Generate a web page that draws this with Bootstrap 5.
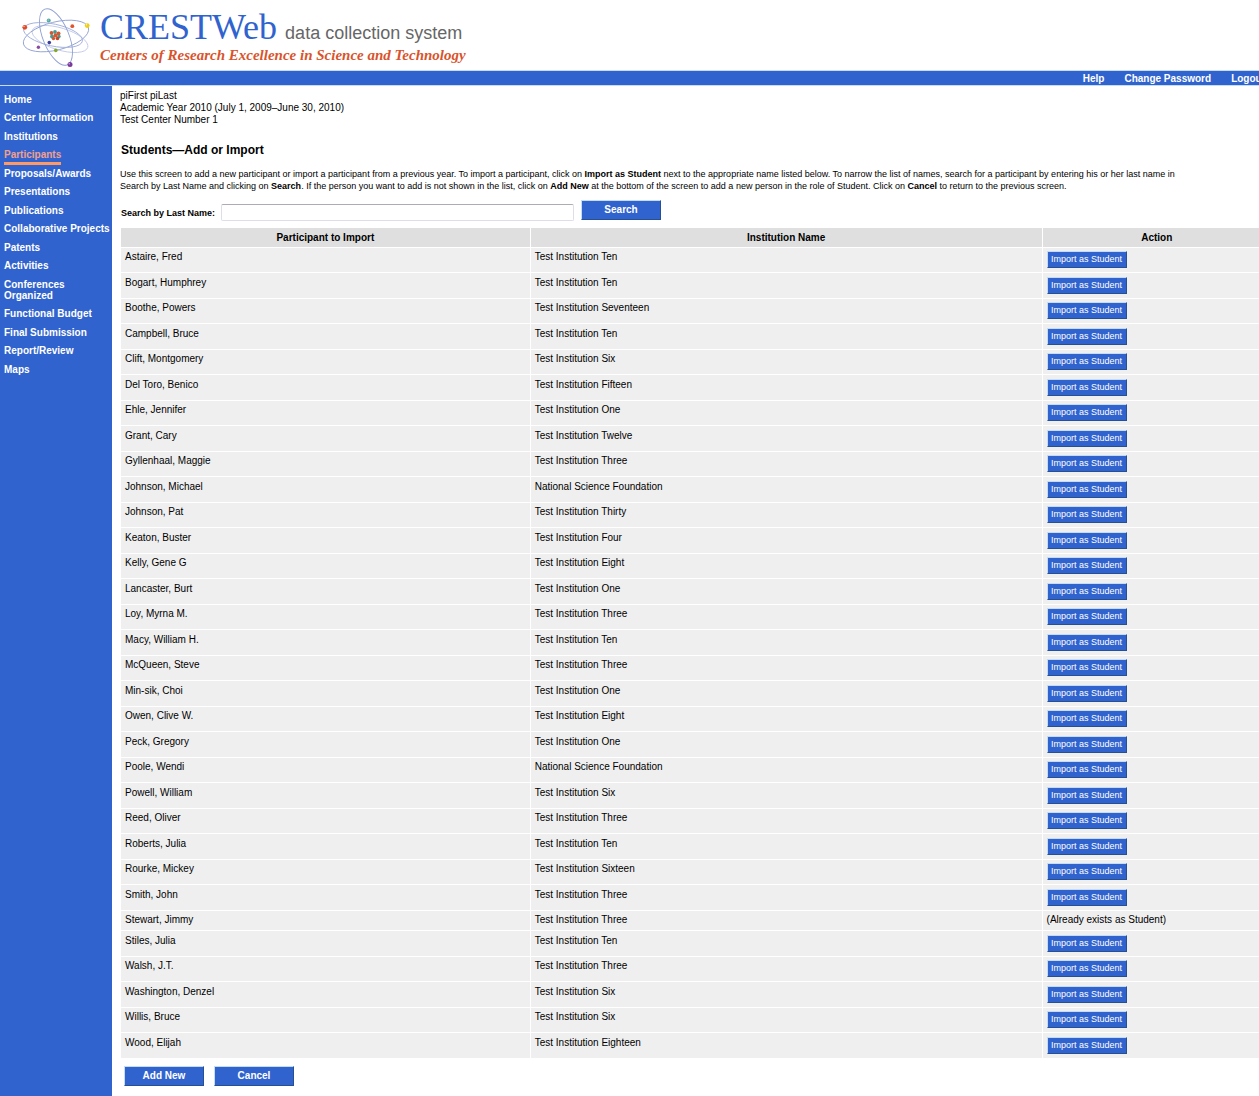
<!DOCTYPE html>
<html lang="en">
<head>
<meta charset="utf-8">
<meta name="viewport" content="width=device-width, initial-scale=1">
<title>CRESTWeb – Students: Add or Import</title>
<link href="https://cdn.jsdelivr.net/npm/bootstrap@5.3.0/dist/css/bootstrap.min.css" rel="stylesheet">
<style>
:root { --crest-blue: #3063ce; --crest-pale: #c5dcf5; --crest-orange: #ff9966; }
body { font-family: "Liberation Sans", Arial, sans-serif; font-size: 10px; line-height: 12px; color: #000; background: #fff; overflow-x: hidden; }
a { text-decoration: none; }
.page-shell { min-width: 1272px; }
.brand-bar { height: 70px; padding: 8px 0 0 20px; }
.brand-atom { width: 72px; height: 60px; }
.brand-name { font-family: "Liberation Serif", "Times New Roman", serif; font-size: 36px; line-height: 38px; color: var(--crest-blue); }
.brand-sub { font-size: 18px; line-height: 20px; color: #666; }
.brand-tag { font-family: "Liberation Serif", "Times New Roman", serif; font-size: 15px; line-height: 18px; font-weight: bold; font-style: italic; color: #d9532c; }
.top-strip { height: 16px; background: var(--crest-blue); border-top: 1px solid var(--crest-pale); border-bottom: 1px solid var(--crest-pale); gap: 20px; padding-right: 7px; line-height: 16px; font-weight: bold; }
.top-strip a, .side-menu a { color: #fff; }
.side-menu { width: 112px; background: var(--crest-blue); padding: 8px 4px 0; line-height: 11px; font-weight: bold; }
.side-menu li { padding-bottom: 7px; }
.side-menu li:nth-child(even) { padding-bottom: 8px; }
.side-menu a.here { color: #f0a08c; border-bottom: 3px solid var(--crest-orange); padding-bottom: 2px; }
.main-pane { padding: 4px 0 10px 8px; }
.screen-title { font-size: 12px; line-height: 16px; font-weight: bold; margin: 16px 0 0 1px; }
.intro-text { font-size: 9px; margin: 10px 30px 0 0; }
.search-row { padding: 8px 0 0 1px; }
.search-row label { font-size: 9px; font-weight: bold; padding-top: 7px; }
.search-row input { width: 353px; height: 17px; margin: 4px 7px 0 6px; padding: 0 3px; border: 1px solid #dcdfe8; border-top-color: #abadb3; border-radius: 2px; }
.crest-btn { background: var(--crest-blue); color: #fff; border: 1px solid; border-color: var(--crest-pale) #26508f #26508f var(--crest-pale); width: 80px; height: 20px; padding: 0; line-height: 18px; font-weight: bold; white-space: nowrap; }
.crest-btn.row-btn { height: 17px; line-height: 15px; font-size: 9px; font-weight: normal; display: block; }
.import-table { border-collapse: separate; border-spacing: 1px; table-layout: fixed; margin-top: 6px; color: #000; }
.import-table.import-table th, .import-table.import-table td { border: 0; box-shadow: none; padding: 3px 4px 0; color: #000; }
.import-table.import-table th { background: #dfdfdf; height: 19px; text-align: center; padding: 0; vertical-align: middle; }
.import-table.import-table td { background: #efefef; height: 24px; vertical-align: top; }
.import-table.import-table tbody tr:nth-child(even) td { height: 25px; padding-top: 4px; }
.import-table.import-table tbody tr.existing td { height: 19px; }
.col-name { width: 35.6%; } .col-inst { width: 44.5%; } .col-act { width: 19.9%; }
.foot-actions { gap: 10px; padding: 7px 0 0 4px; }
</style>
<script src="https://cdn.jsdelivr.net/npm/bootstrap@5.3.0/dist/js/bootstrap.bundle.min.js" defer></script>
</head>
<body>
<div class="page-shell min-vh-100 d-flex flex-column">
<header>
  <div class="brand-bar d-flex align-items-start">
    <svg class="brand-atom flex-shrink-0" viewBox="20 8 72 60" fill="none" role="img" aria-label="Atom">
      <g stroke-width="0.9">
        <ellipse cx="60" cy="39" rx="29" ry="11" transform="rotate(17 60 39)" stroke="#c3cbea"/>
        <ellipse cx="56" cy="36" rx="33.500" ry="14" transform="rotate(-14 56 36)" stroke="#93a3d3"/>
        <ellipse cx="53" cy="35" rx="30" ry="11" transform="rotate(12 53 35)" stroke="#a3b0dc"/>
        <ellipse cx="56" cy="37" rx="30" ry="13" transform="rotate(68 56 37)" stroke="#8fa0d3"/>
      </g>
      <g>
        <circle cx="51.500" cy="33" r="1.900" fill="#d9562f"/><circle cx="55" cy="32" r="1.900" fill="#3f9d95"/><circle cx="58.500" cy="33.500" r="2" fill="#d9562f"/>
        <circle cx="52" cy="36.500" r="1.900" fill="#3f9d95"/><circle cx="55.500" cy="35.500" r="2" fill="#d9562f"/><circle cx="59" cy="36.500" r="1.700" fill="#3f9d95"/>
        <circle cx="53.500" cy="38.500" r="1.700" fill="#d9562f"/><circle cx="57.500" cy="38.500" r="1.800" fill="#c74526"/>
      </g>
      <circle cx="24.800" cy="27.300" r="2.400" fill="#e04a25"/><circle cx="87.200" cy="25.600" r="2.400" fill="#efcf12"/>
      <circle cx="70" cy="64.500" r="2.500" fill="#7a3a9c"/><circle cx="48.700" cy="20.500" r="2" fill="#57aaa4"/>
      <circle cx="72.300" cy="26.200" r="1.900" fill="#e0552c"/><circle cx="38.400" cy="47.200" r="1.700" fill="#8a4aa6"/>
      <circle cx="55.800" cy="50.400" r="1.800" fill="#82a82b"/><circle cx="49.300" cy="42.600" r="1.800" fill="#3d3f9c"/>
      <g fill="#fff" opacity="0.7"><circle cx="24" cy="26.500" r="0.700"/><circle cx="86.500" cy="24.800" r="0.700"/><circle cx="69.200" cy="63.700" r="0.700"/><circle cx="48.200" cy="20" r="0.600"/></g>
    </svg>
    <div class="ps-2">
      <div class="d-flex align-items-baseline gap-2"><span class="brand-name">CRESTWeb</span><span class="brand-sub">data collection system</span></div>
      <div class="brand-tag">Centers of Research Excellence in Science and Technology</div>
    </div>
  </div>
  <nav class="top-strip d-flex justify-content-end" aria-label="Account">
    <a href="#">Help</a><a href="#">Change Password</a><a href="#">Logout</a>
  </nav>
</header>
<div class="d-flex flex-grow-1">
  <nav class="side-menu flex-shrink-0" aria-label="Sections">
    <ul class="list-unstyled mb-0">
      <li><a href="#">Home</a></li>
      <li><a href="#">Center Information</a></li>
      <li><a href="#">Institutions</a></li>
      <li><a href="#" class="here" aria-current="page">Participants</a></li>
      <li><a href="#">Proposals/Awards</a></li>
      <li><a href="#">Presentations</a></li>
      <li><a href="#">Publications</a></li>
      <li class="text-nowrap"><a href="#">Collaborative Projects</a></li>
      <li><a href="#">Patents</a></li>
      <li><a href="#">Activities</a></li>
      <li><a href="#">Conferences<br>Organized</a></li>
      <li><a href="#">Functional Budget</a></li>
      <li><a href="#">Final Submission</a></li>
      <li><a href="#">Report/Review</a></li>
      <li><a href="#">Maps</a></li>
    </ul>
  </nav>
  <main class="main-pane flex-grow-1">
    <div>piFirst piLast</div>
    <div>Academic Year 2010 (July 1, 2009–June 30, 2010)</div>
    <div>Test Center Number 1</div>
    <h1 class="screen-title">Students—Add or Import</h1>
    <p class="intro-text">Use this screen to add a new participant or import a participant from a previous year. To import a participant, click on <b>Import as Student</b> next to the appropriate name listed below. To narrow the list of names, search for a participant by entering his or her last name in<br>Search by Last Name and clicking on <b>Search</b>. If the person you want to add is not shown in the list, click on <b>Add New</b> at the bottom of the screen to add a new person in the role of Student. Click on <b>Cancel</b> to return to the previous screen.</p>
    <form class="search-row d-flex align-items-start">
      <label for="lastName">Search by Last Name:</label>
      <input type="text" id="lastName">
      <button type="button" class="crest-btn">Search</button>
    </form>
    <table class="table mb-0 import-table">
      <colgroup><col class="col-name"><col class="col-inst"><col class="col-act"></colgroup>
      <thead><tr><th scope="col">Participant to Import</th><th scope="col">Institution Name</th><th scope="col">Action</th></tr></thead>
      <tbody>
        <tr><td>Astaire, Fred</td><td>Test Institution Ten</td><td><button type="button" class="crest-btn row-btn">Import as Student</button></td></tr>
        <tr><td>Bogart, Humphrey</td><td>Test Institution Ten</td><td><button type="button" class="crest-btn row-btn">Import as Student</button></td></tr>
        <tr><td>Boothe, Powers</td><td>Test Institution Seventeen</td><td><button type="button" class="crest-btn row-btn">Import as Student</button></td></tr>
        <tr><td>Campbell, Bruce</td><td>Test Institution Ten</td><td><button type="button" class="crest-btn row-btn">Import as Student</button></td></tr>
        <tr><td>Clift, Montgomery</td><td>Test Institution Six</td><td><button type="button" class="crest-btn row-btn">Import as Student</button></td></tr>
        <tr><td>Del Toro, Benico</td><td>Test Institution Fifteen</td><td><button type="button" class="crest-btn row-btn">Import as Student</button></td></tr>
        <tr><td>Ehle, Jennifer</td><td>Test Institution One</td><td><button type="button" class="crest-btn row-btn">Import as Student</button></td></tr>
        <tr><td>Grant, Cary</td><td>Test Institution Twelve</td><td><button type="button" class="crest-btn row-btn">Import as Student</button></td></tr>
        <tr><td>Gyllenhaal, Maggie</td><td>Test Institution Three</td><td><button type="button" class="crest-btn row-btn">Import as Student</button></td></tr>
        <tr><td>Johnson, Michael</td><td>National Science Foundation</td><td><button type="button" class="crest-btn row-btn">Import as Student</button></td></tr>
        <tr><td>Johnson, Pat</td><td>Test Institution Thirty</td><td><button type="button" class="crest-btn row-btn">Import as Student</button></td></tr>
        <tr><td>Keaton, Buster</td><td>Test Institution Four</td><td><button type="button" class="crest-btn row-btn">Import as Student</button></td></tr>
        <tr><td>Kelly, Gene G</td><td>Test Institution Eight</td><td><button type="button" class="crest-btn row-btn">Import as Student</button></td></tr>
        <tr><td>Lancaster, Burt</td><td>Test Institution One</td><td><button type="button" class="crest-btn row-btn">Import as Student</button></td></tr>
        <tr><td>Loy, Myrna M.</td><td>Test Institution Three</td><td><button type="button" class="crest-btn row-btn">Import as Student</button></td></tr>
        <tr><td>Macy, William H.</td><td>Test Institution Ten</td><td><button type="button" class="crest-btn row-btn">Import as Student</button></td></tr>
        <tr><td>McQueen, Steve</td><td>Test Institution Three</td><td><button type="button" class="crest-btn row-btn">Import as Student</button></td></tr>
        <tr><td>Min-sik, Choi</td><td>Test Institution One</td><td><button type="button" class="crest-btn row-btn">Import as Student</button></td></tr>
        <tr><td>Owen, Clive W.</td><td>Test Institution Eight</td><td><button type="button" class="crest-btn row-btn">Import as Student</button></td></tr>
        <tr><td>Peck, Gregory</td><td>Test Institution One</td><td><button type="button" class="crest-btn row-btn">Import as Student</button></td></tr>
        <tr><td>Poole, Wendi</td><td>National Science Foundation</td><td><button type="button" class="crest-btn row-btn">Import as Student</button></td></tr>
        <tr><td>Powell, William</td><td>Test Institution Six</td><td><button type="button" class="crest-btn row-btn">Import as Student</button></td></tr>
        <tr><td>Reed, Oliver</td><td>Test Institution Three</td><td><button type="button" class="crest-btn row-btn">Import as Student</button></td></tr>
        <tr><td>Roberts, Julia</td><td>Test Institution Ten</td><td><button type="button" class="crest-btn row-btn">Import as Student</button></td></tr>
        <tr><td>Rourke, Mickey</td><td>Test Institution Sixteen</td><td><button type="button" class="crest-btn row-btn">Import as Student</button></td></tr>
        <tr><td>Smith, John</td><td>Test Institution Three</td><td><button type="button" class="crest-btn row-btn">Import as Student</button></td></tr>
        <tr class="existing"><td>Stewart, Jimmy</td><td>Test Institution Three</td><td>(Already exists as Student)</td></tr>
        <tr><td>Stiles, Julia</td><td>Test Institution Ten</td><td><button type="button" class="crest-btn row-btn">Import as Student</button></td></tr>
        <tr><td>Walsh, J.T.</td><td>Test Institution Three</td><td><button type="button" class="crest-btn row-btn">Import as Student</button></td></tr>
        <tr><td>Washington, Denzel</td><td>Test Institution Six</td><td><button type="button" class="crest-btn row-btn">Import as Student</button></td></tr>
        <tr><td>Willis, Bruce</td><td>Test Institution Six</td><td><button type="button" class="crest-btn row-btn">Import as Student</button></td></tr>
        <tr><td>Wood, Elijah</td><td>Test Institution Eighteen</td><td><button type="button" class="crest-btn row-btn">Import as Student</button></td></tr>
      </tbody>
    </table>
    <div class="foot-actions d-flex">
      <button type="button" class="crest-btn">Add New</button>
      <button type="button" class="crest-btn">Cancel</button>
    </div>
  </main>
</div>
</div>
</body>
</html>
